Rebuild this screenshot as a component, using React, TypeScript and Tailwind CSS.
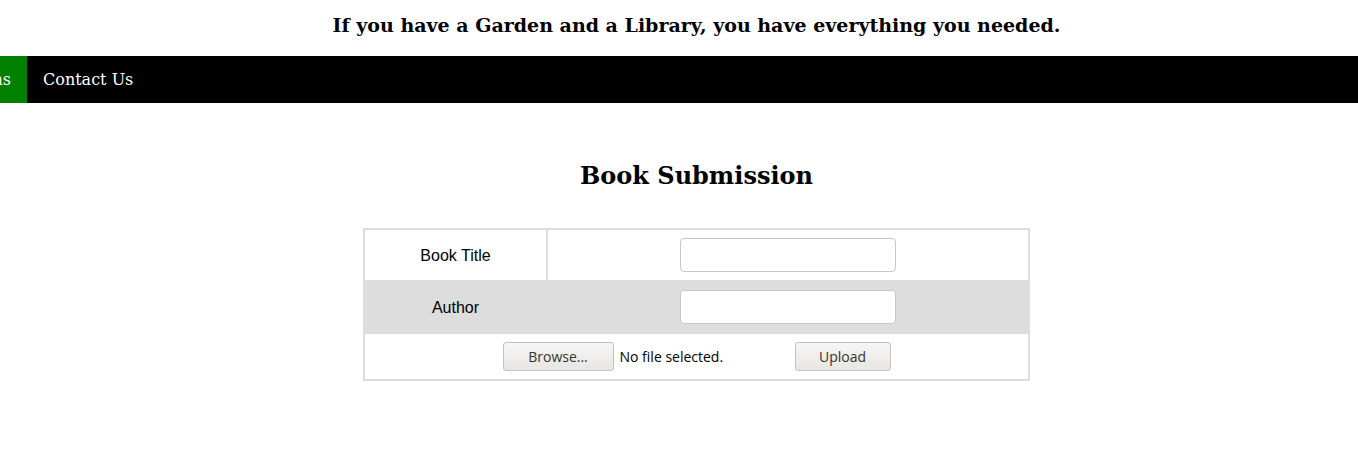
import React from 'react'

const serif = "font-['DejaVu_Serif',serif]"

export default function App() {
  return (
    <div className="w-full min-h-screen bg-white text-black">
      {/* Quote header */}
      <header className="h-[56px] pl-[35px] pt-[14px] text-center">
        <h4 className={`${serif} text-[19px] leading-[22px] font-bold`}>
          If you have a Garden and a Library, you have everything you needed.
        </h4>
      </header>

      {/* Nav bar */}
      <nav className={`${serif} h-[47px] bg-black flex items-stretch text-[16px] text-white`}>
        <div className="w-[27px] bg-[#008000] flex items-center justify-end overflow-hidden pr-[16px]">
          <span className="whitespace-nowrap">ns</span>
        </div>
        <a className="flex items-center px-[16px]">Contact Us</a>
      </nav>

      <main className="flex flex-col items-center pl-[35px]">
        <h2 className={`${serif} text-[24px] font-bold mt-[58px] leading-[30px]`}>Book Submission</h2>

        <form className="mt-[37px]">
          <table className="border-collapse border-2 border-[#dddddd] w-[667px] font-['Liberation_Sans',Arial,sans-serif] text-[16px]">
            <tbody>
              <tr className="border-2 border-[#dddddd]">
                <td className="w-[183px] text-center p-[8px] border-2 border-[#dddddd]">
                  <span className="relative top-[1px]">Book Title</span>
                </td>
                <td className="text-center p-[8px] border-2 border-[#dddddd]">
                  <input type="text" className="w-[216px] h-[34px] bg-white border border-[#c8c8c4] rounded-[4px] align-middle" />
                </td>
              </tr>
              <tr className="border-2 border-[#dddddd] bg-[#dddddd]">
                <td className="text-center p-[8px] border-2 border-[#dddddd]">
                  <span className="relative top-[1px]">Author</span>
                </td>
                <td className="text-center p-[8px] border-2 border-[#dddddd]">
                  <input type="text" className="w-[216px] h-[34px] bg-white border border-[#c8c8c4] rounded-[4px] align-middle" />
                </td>
              </tr>
              <tr>
                <td colSpan={2} className="p-[8px]">
                  <div className="flex items-center justify-center font-['Open_Sans',sans-serif] text-[14px]">
                    <div className="w-[288px] flex items-center">
                      <button type="button" className="w-[111px] h-[29px] rounded-[3px] border border-[#c5c3bf] bg-gradient-to-b from-[#f7f6f5] to-[#e8e6e3] text-[#333333]">
                        Browse...
                      </button>
                      <span className="ml-[6px] text-black">No file selected.</span>
                    </div>
                    <button type="submit" className="ml-[4px] w-[96px] h-[29px] rounded-[3px] border border-[#c5c3bf] bg-gradient-to-b from-[#f7f6f5] to-[#e8e6e3] text-[#333333]">
                      Upload
                    </button>
                  </div>
                </td>
              </tr>
            </tbody>
          </table>
        </form>
      </main>
    </div>
  )
}
